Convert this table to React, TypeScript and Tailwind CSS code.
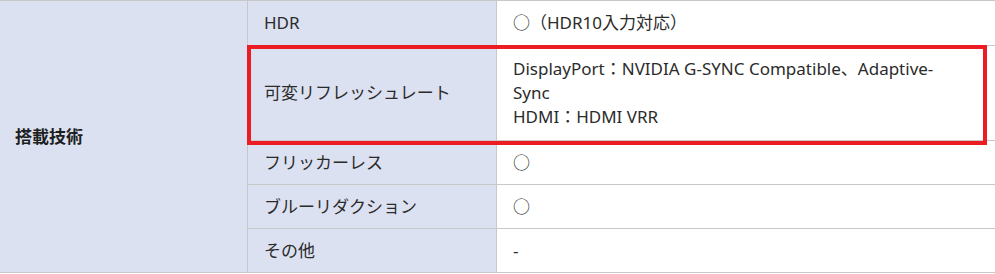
import React from "react";

type Row = { label: string; value: React.ReactNode; h: string };

// Row heights include the 1px bottom rule (border-box).
const rows: Row[] = [
  { label: "HDR", value: "○（HDR10入力対応）", h: "h-[45px]" },
  {
    label: "可変リフレッシュレート",
    value: (
      <>
        DisplayPort：NVIDIA G-SYNC Compatible、Adaptive-Sync
        <br />
        HDMI：HDMI VRR
      </>
    ),
    h: "h-[95px]",
  },
  { label: "フリッカーレス", value: "○", h: "h-[44px]" },
  { label: "ブルーリダクション", value: "○", h: "h-[44px]" },
  { label: "その他", value: "-", h: "h-[43px]" },
];

export default function App() {
  return (
    <div
      className="w-[995px] h-[274px] bg-white text-[17px] text-[#2b2b2b] leading-[24px]"
      style={{ fontFamily: '"Noto Sans", "Noto Sans CJK JP", sans-serif' }}
    >
      <div className="relative flex border-t border-b border-[#c8c8c8]">
        <div className="w-[248px] shrink-0 bg-[#dce1f2] border-r border-[#c8c8c8] flex items-center pl-[15px] font-bold text-[#1e1e1e]">
          搭載技術
        </div>
        <div className="flex-1 flex flex-col">
          {rows.map((r, i) => (
            <div
              key={r.label}
              className={`flex shrink-0 ${r.h} ${i < rows.length - 1 ? "border-b border-[#c8c8c8]" : ""}`}
            >
              <div className="w-[249px] shrink-0 bg-[#dce1f2] border-r border-[#c8c8c8] flex items-center pl-[16px]">
                {r.label}
              </div>
              <div className="flex-1 flex items-center pl-[16px] pr-[16px]">
                <div className="max-w-[440px]">{r.value}</div>
              </div>
            </div>
          ))}
        </div>
        {/* highlight frame around the variable refresh rate row */}
        <div className="absolute left-[247px] top-[44px] w-[740px] h-[100px] border-[4px] border-[#ec1c24] pointer-events-none" />
      </div>
    </div>
  );
}
